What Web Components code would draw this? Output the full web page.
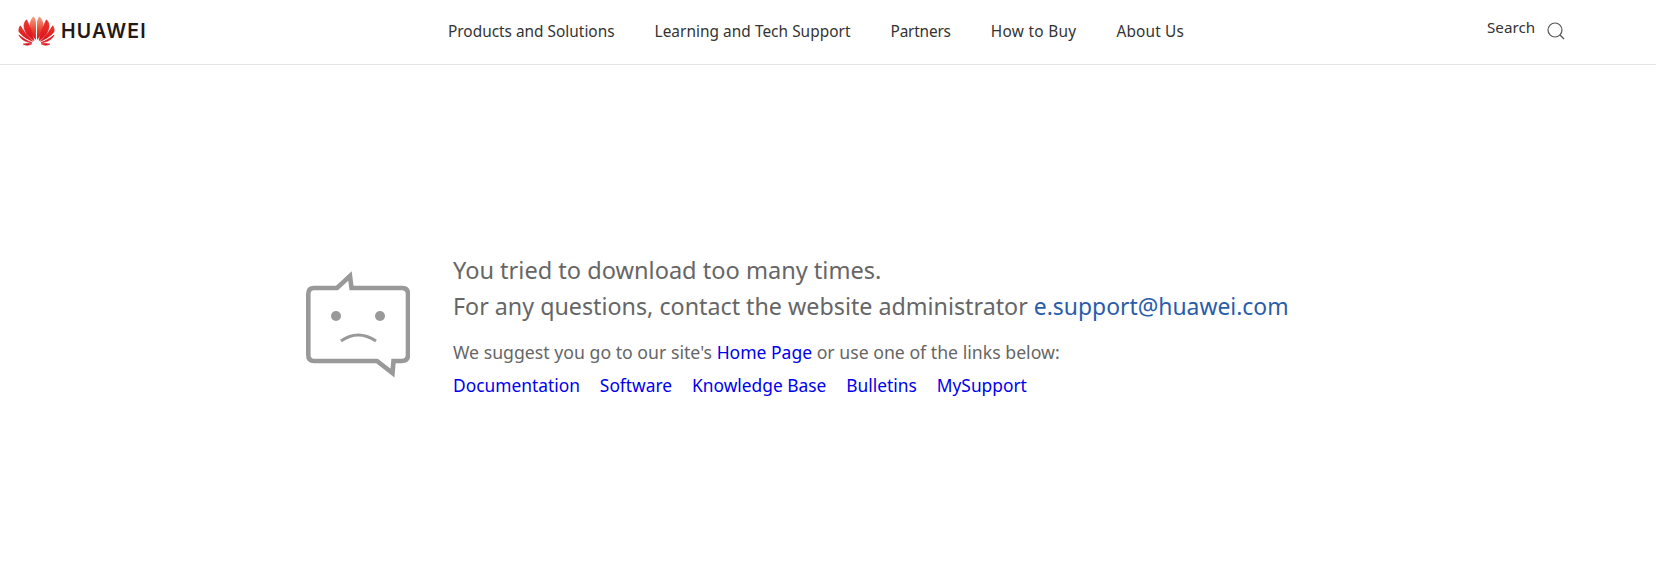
<!DOCTYPE html>
<html lang="en">
<head>
<meta charset="utf-8">
<title>Huawei</title>
<style>
    html, body {
        margin: 0;
        background: #fff;
        font-family: 'Noto Sans', sans-serif;
    }
</style>
</head>
<body>
<hw-header></hw-header>
<hw-error>
    <span slot="title">You tried to download too many times.</span>
    <span slot="contact">For any questions, contact the website administrator <a href="#">e.support@huawei.com</a></span>
</hw-error>

<script>
const headerTemplate = document.createElement("template")
headerTemplate.innerHTML = `
<style>
    :host {
        display: flex;
        align-items: center;
        height: 62px;
        padding: 0 0 2px 18px;
        border-bottom: 1px solid #e4e4e4;
        font-family: 'Noto Sans', sans-serif;
        color: #333;
    }

    .logo {
        display: flex;
        align-items: center;
        gap: 6px;
        width: 430px;
        flex: none;
    }

    .word {
        font-family: 'Inter', sans-serif;
        font-weight: 600;
        font-size: 19.5px;
        color: #231815;
        letter-spacing: 1.25px;
    }

    nav {
        display: flex;
        gap: 40px;
        font-size: 15.4px;
        width: 1039px;
        flex: none;
    }

    .search {
        display: flex;
        align-items: center;
        gap: 12px;
        font-size: 15.2px;
    }

    .search span {
        position: relative;
        top: -4px;
    }

    .search svg {
        stroke: #555;
    }

    .petals path {
        stroke: #dc1c20;
        stroke-width: .7px;
    }
</style>
<div class="logo">
    <svg width="37" height="30" viewBox="0 0 37 30" class="petals">
        <defs>
            <linearGradient id="petal" x1="0" y1="0" x2="0" y2="1">
                <stop offset="0" stop-color="#ee3a2c"/>
                <stop offset="1" stop-color="#d80f1c"/>
            </linearGradient>
            <linearGradient id="petalMid" x1="0" y1="0" x2="0" y2="1">
                <stop offset="0" stop-color="#f6a288"/>
                <stop offset=".6" stop-color="#e8402c"/>
                <stop offset="1" stop-color="#d80f1c"/>
            </linearGradient>
        </defs>
        <g>
            <path style="stroke:none" fill="url(#petalMid)" d="M17.9 24 C13 19 11 13 11.8 7.5 C12.2 4.5 13.6 2 15.6 .4 C17.4 2 18 5 18 8.5 C18 14 18 20 17.9 24 Z"/>
            <path fill="url(#petal)" d="M16 24.5 C10.5 21.5 6.2 15.5 6 10 C6 7.5 7 5.2 8.6 3.8 C11 8.5 14.2 17 16 24.5 Z"/>
            <path fill="url(#petal)" d="M14.7 25.3 C8.8 23 2.8 19 .9 15.2 C.8 13.2 1.3 11.2 2.3 9.8 C5.2 15 10.2 20.6 14.7 25.3 Z"/>
            <path fill="#d4101b" d="M13.8 26.6 C9.5 26.4 3.6 24.6 .9 19 C5 22.4 9.6 25 13.8 26.6 Z"/>
            <path fill="#d4101b" d="M13.8 27.8 C10.8 29.6 7.8 29.6 5.2 28.1 C8.2 27.3 11 27.2 13.8 27.8 Z"/>
        </g>
        <g transform="translate(37 0) scale(-1 1)">
            <path style="stroke:none" fill="url(#petalMid)" d="M17.9 24 C13 19 11 13 11.8 7.5 C12.2 4.5 13.6 2 15.6 .4 C17.4 2 18 5 18 8.5 C18 14 18 20 17.9 24 Z"/>
            <path fill="url(#petal)" d="M16 24.5 C10.5 21.5 6.2 15.5 6 10 C6 7.5 7 5.2 8.6 3.8 C11 8.5 14.2 17 16 24.5 Z"/>
            <path fill="url(#petal)" d="M14.7 25.3 C8.8 23 2.8 19 .9 15.2 C.8 13.2 1.3 11.2 2.3 9.8 C5.2 15 10.2 20.6 14.7 25.3 Z"/>
            <path fill="#d4101b" d="M13.8 26.6 C9.5 26.4 3.6 24.6 .9 19 C5 22.4 9.6 25 13.8 26.6 Z"/>
            <path fill="#d4101b" d="M13.8 27.8 C10.8 29.6 7.8 29.6 5.2 28.1 C8.2 27.3 11 27.2 13.8 27.8 Z"/>
        </g>
    </svg>
    <span class="word">HUAWEI</span>
</div>
<nav>
    <span>Products and Solutions</span>
    <span style="letter-spacing: .04px">Learning and Tech Support</span>
    <span style="letter-spacing: -.2px">Partners</span>
    <span style="letter-spacing: .3px">How to Buy</span>
    <span style="letter-spacing: .15px">About Us</span>
</nav>
<div class="search">
    <span>Search</span>
    <svg width="18" height="18" viewBox="0 0 18 18" fill="none" stroke-width="1.2">
        <circle cx="8" cy="8" r="7"/>
        <path d="M13 13 L17 17"/>
    </svg>
</div>
`

class HwHeader extends HTMLElement {

    constructor() {
        super();
        this.attachShadow({mode: 'open'})
        this.shadowRoot.appendChild(headerTemplate.content.cloneNode(true))
    }
}

const errorTemplate = document.createElement("template")
errorTemplate.innerHTML = `
<style>
    :host {
        display: flex;
        padding: 187px 0 0 306px;
        font-family: 'Noto Sans', sans-serif;
        color: #666;
    }

    svg {
        flex: none;
        margin: 18px 43px 0 0;
    }

    h1 {
        font-size: 23.57px;
        font-weight: 400;
        line-height: 36px;
        margin: 0 0 14px 0;
    }

    p {
        font-size: 17.7px;
        line-height: 26px;
        margin: 0 0 7px 0;
    }

    a {
        color: #0000ee;
        text-decoration: none;
    }

    .links {
        display: flex;
        gap: 20px;
        font-size: 17.35px;
        line-height: 26px;
    }
</style>
<svg width="104" height="110" viewBox="0 0 104 110" fill="none" stroke="#999">
    <path stroke-width="4.6" d="M8 18 H31 L44 6 L45.5 18 H96 Q102 18 102 24 V85 Q102 91 96 91 H87.5 L86.5 103 L71 91 H8 Q2.3 91 2.3 85 V24 Q2.3 18 8 18 Z"/>
    <circle cx="30" cy="46" r="5" fill="#999" stroke="none"/>
    <circle cx="74" cy="46" r="5" fill="#999" stroke="none"/>
    <path stroke-width="3" d="M35 71 Q52 59 70 71"/>
</svg>
<div>
    <h1>
        <slot name="title"></slot>
        <slot name="contact"></slot>
    </h1>
    <p>We suggest you go to our site's <a href="#" style="font-size: 17.5px">Home Page</a> or use one of the links below:</p>
    <div class="links">
        <a href="#">Documentation</a>
        <a href="#">Software</a>
        <a href="#">Knowledge Base</a>
        <a href="#">Bulletins</a>
        <a href="#">MySupport</a>
    </div>
</div>
`

class HwError extends HTMLElement {

    constructor() {
        super();
        this.attachShadow({mode: 'open'})
        this.shadowRoot.appendChild(errorTemplate.content.cloneNode(true))
    }
}

window.customElements.define("hw-header", HwHeader)
window.customElements.define("hw-error", HwError)

// light DOM link inside the slotted span, so it needs its colour here
document.querySelector("hw-error a").style.cssText = "color:#2a5caa;text-decoration:none;font-size:22.9px"
document.querySelector("hw-error span[slot=title]").style.display = "block"
document.querySelector("hw-error span[slot=contact]").style.cssText = "display:block;font-size:23.27px"
</script>
</body>
</html>
